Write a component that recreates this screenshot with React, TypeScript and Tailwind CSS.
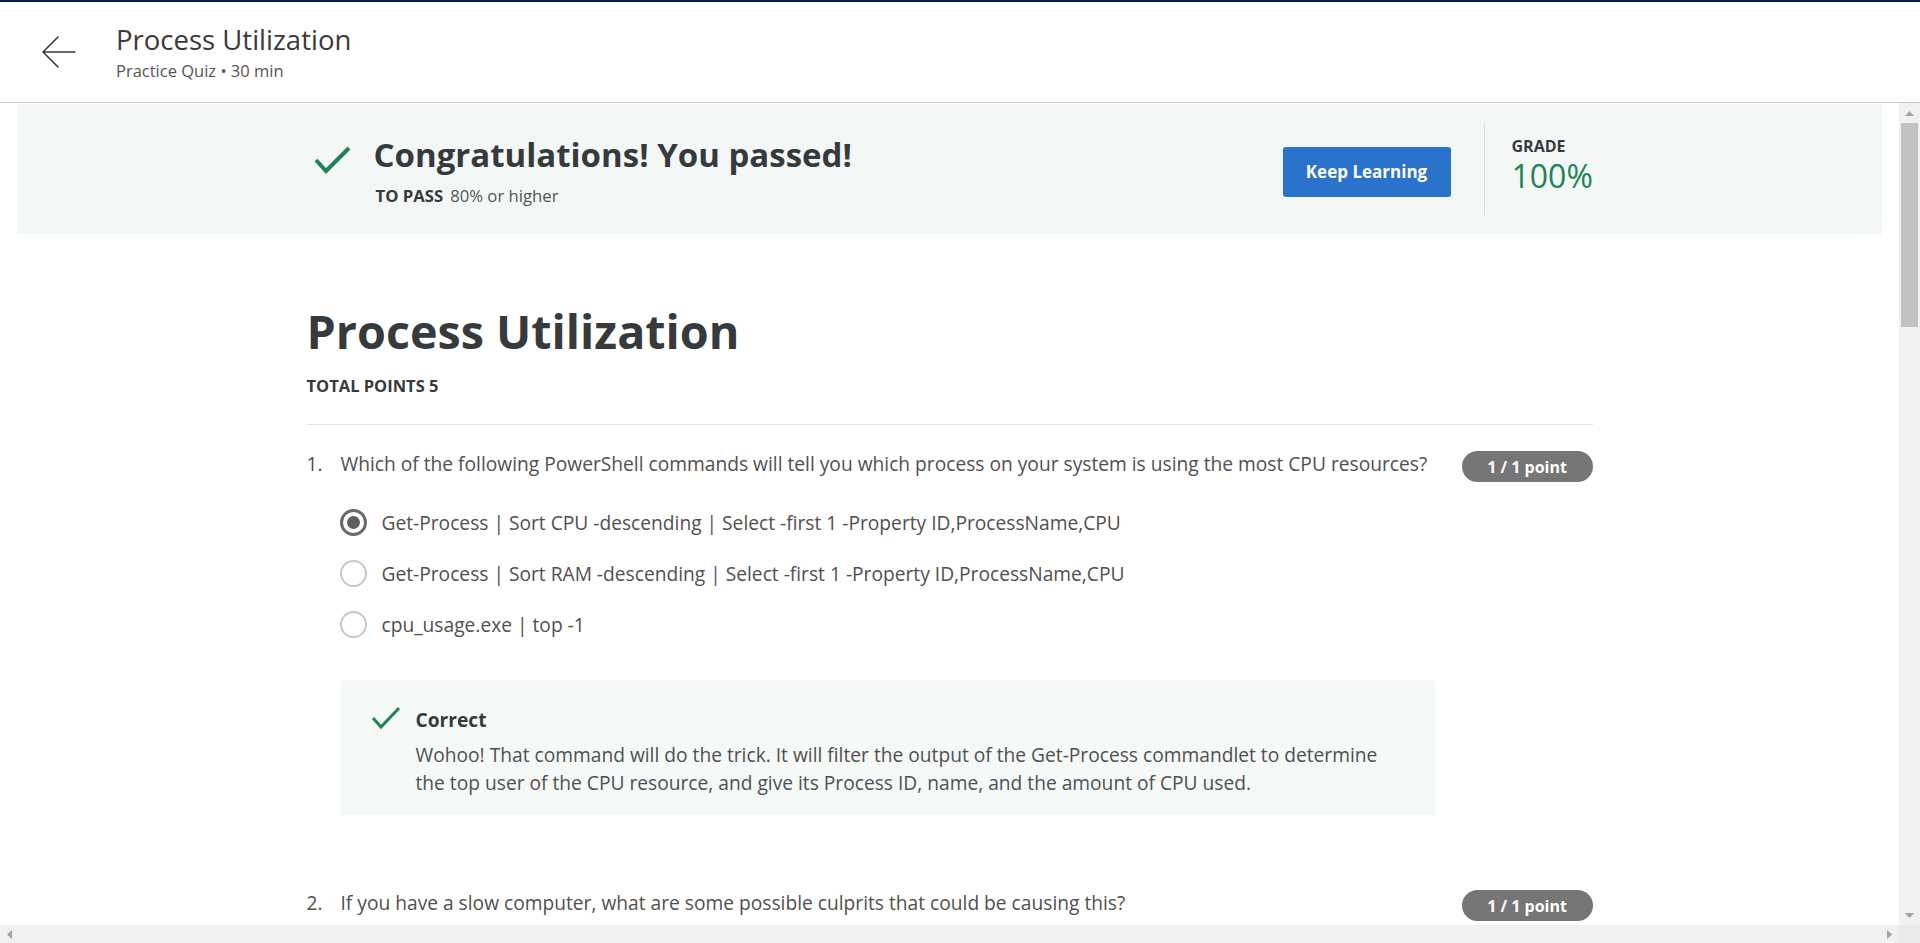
import React from "react";

function BackArrow() {
  return (
    <svg width="36" height="34" viewBox="0 0 36 34" fill="none">
      <path d="M2 17 H34 M2 17 L17 2 M2 17 L17 32" stroke="#3b3b3b" strokeWidth="1.6" strokeLinecap="round" strokeLinejoin="round" />
    </svg>
  );
}

function BigCheck() {
  return (
    <svg width="37" height="29" viewBox="0 0 37 29" fill="none">
      <polyline points="2,15 12,26 35,3" stroke="#1f8354" strokeWidth="4" fill="none" />
    </svg>
  );
}

function SmallCheck() {
  return (
    <svg width="30" height="24" viewBox="0 0 30 24" fill="none">
      <polyline points="2,12 10,21 28,2" stroke="#1f8354" strokeWidth="3" fill="none" />
    </svg>
  );
}

function Radio({ checked }: { checked?: boolean }) {
  return checked ? (
    <div className="w-[27px] h-[27px] rounded-full border-[3px] border-[#6a6a6a] flex items-center justify-center shrink-0">
      <div className="w-[13px] h-[13px] rounded-full bg-[#5f5f5f]" />
    </div>
  ) : (
    <div className="w-[27px] h-[27px] rounded-full border-2 border-[#c6c6c6] shrink-0" />
  );
}

function Badge() {
  return (
    <div className="mt-[1px] w-[131px] h-[31px] rounded-full bg-[#767676] text-white font-bold text-[16px] flex items-center justify-center shrink-0">
      1 / 1 point
    </div>
  );
}

export default function App() {
  const options = [
    "Get-Process | Sort CPU -descending | Select -first 1 -Property ID,ProcessName,CPU",
    "Get-Process | Sort RAM -descending | Select -first 1 -Property ID,ProcessName,CPU",
    "cpu_usage.exe | top -1",
  ];
  return (
    <div className="w-[1920px] h-[943px] overflow-hidden bg-white flex flex-col font-['Open_Sans',sans-serif] text-[#373a3c]">
      <div className="h-[2px] bg-[#0d1c4a] shrink-0" />
      <header className="h-[101px] shrink-0 border-b border-[#c9c9c9] flex items-center">
        <div className="w-[116px] flex justify-center pl-[1px]">
          <BackArrow />
        </div>
        <div className="flex flex-col">
          <div className="text-[27.5px] leading-[34px] text-[#3a3a3a]">Process Utilization</div>
          <div className="mt-[3px] text-[16.5px] leading-[22px] text-[#555]">Practice Quiz • 30 min</div>
        </div>
      </header>

      <div className="flex-1 flex min-h-0">
        <div className="flex-1 flex flex-col min-w-0">
          <div className="flex-1 overflow-hidden px-[17px] pt-[1px]">
            {/* Banner */}
            <div className="h-[130px] bg-[#f3f8f6]">
              <div className="w-[1286px] mx-auto flex items-start h-full">
                <div className="mt-[31px] ml-[7px] flex flex-col">
                  <div className="flex items-center h-[40px]">
                    <div className="mt-[8px]">
                      <BigCheck />
                    </div>
                    <div className="ml-[23px] text-[33px] leading-[40px] font-bold text-[#373a3c]">
                      Congratulations! You passed!
                    </div>
                  </div>
                  <div className="mt-[9px] ml-[62px] text-[16.7px] leading-[24px] text-[#555]">
                    <span className="font-bold text-[#373a3c]">TO PASS</span>
                    <span className="ml-[7px]">80% or higher</span>
                  </div>
                </div>
                <div className="flex-1" />
                <button className="mt-[43px] w-[168px] h-[50px] rounded-[3px] bg-[#2a73cc] text-white font-bold text-[17px]">
                  Keep Learning
                </button>
                <div className="mt-[19px] ml-[33px] w-px h-[92px] bg-[#dcdcdc]" />
                <div className="ml-[27px] w-[81px] mt-[31px] flex flex-col">
                  <div className="text-[16px] leading-[22px] font-bold text-[#373a3c]">GRADE</div>
                  <div className="mt-[1px] text-[32px] leading-[36px] text-[#1f8354] whitespace-nowrap">100%</div>
                </div>
              </div>
            </div>

            {/* Main content */}
            <div className="w-[1286px] mx-auto">
              <h1 className="mt-[69px] text-[46.7px] leading-[56px] font-bold text-[#373a3c]">Process Utilization</h1>
              <div className="mt-[15px] text-[16.5px] leading-[24px] font-bold text-[#373a3c]">TOTAL POINTS 5</div>
              <div className="mt-[26px] h-px bg-[#e2e2e2]" />

              {/* Question 1 */}
              <div className="mt-[25px] flex items-start">
                <div className="w-[34px] text-[19.2px] leading-[28px] text-[#505050]">1.</div>
                <div className="flex-1 text-[19.2px] leading-[28px] text-[#505050] whitespace-nowrap">
                  Which of the following PowerShell commands will tell you which process on your system is using the most CPU resources?
                </div>
                <Badge />
              </div>

              <div className="mt-[15px] ml-[33px] flex flex-col">
                {options.map((o, i) => (
                  <div key={i} className="h-[51px] flex items-center">
                    <Radio checked={i === 0} />
                    <div className="ml-[15px] text-[19.2px] leading-[28px] text-[#505050]">{o}</div>
                  </div>
                ))}
              </div>

              <div className="mt-[30px] ml-[34px] w-[1094px] h-[135px] bg-[#f5f9f7] pt-[26px] pl-[30px] pr-[20px] flex items-start">
                <div className="w-[45px] shrink-0">
                  <SmallCheck />
                </div>
                <div className="flex flex-col">
                  <div className="text-[19.2px] leading-[28px] font-bold text-[#373a3c]">Correct</div>
                  <div className="mt-[7px] text-[19.2px] leading-[28px] text-[#505050]">
                    Wohoo! That command will do the trick. It will filter the output of the Get-Process commandlet to determine
                    <br />
                    the top user of the CPU resource, and give its Process ID, name, and the amount of CPU used.
                  </div>
                </div>
              </div>

              {/* Question 2 */}
              <div className="mt-[74px] flex items-start">
                <div className="w-[34px] text-[19.2px] leading-[28px] text-[#505050]">2.</div>
                <div className="flex-1 text-[19.2px] leading-[28px] text-[#505050] whitespace-nowrap">
                  If you have a slow computer, what are some possible culprits that could be causing this?
                </div>
                <Badge />
              </div>
              <div className="h-[200px]" />
            </div>
          </div>

          {/* Horizontal scrollbar */}
          <div className="h-[18px] shrink-0 bg-[#f1f1f1] flex items-center justify-between px-[6px]">
            <svg width="6" height="9" viewBox="0 0 6 9"><polygon points="6,0 6,9 1,4.5" fill="#a3a3a3" /></svg>
            <svg width="6" height="9" viewBox="0 0 6 9"><polygon points="0,0 0,9 5,4.5" fill="#a3a3a3" /></svg>
          </div>
        </div>

        {/* Vertical scrollbar */}
        <div className="w-[21px] shrink-0 bg-[#f1f1f1] flex flex-col items-center">
          <div className="h-[19px] flex items-center justify-center">
            <svg width="9" height="6" viewBox="0 0 9 6"><polygon points="0,6 9,6 4.5,1" fill="#a3a3a3" /></svg>
          </div>
          <div className="mt-[1px] w-[17px] h-[204px] bg-[#c1c1c1]" />
          <div className="flex-1" />
          <div className="h-[19px] flex items-center justify-center">
            <svg width="9" height="6" viewBox="0 0 9 6"><polygon points="0,0 9,0 4.5,5" fill="#a3a3a3" /></svg>
          </div>
          <div className="h-[18px] w-full bg-[#eaeaea]" />
        </div>
      </div>
    </div>
  );
}
